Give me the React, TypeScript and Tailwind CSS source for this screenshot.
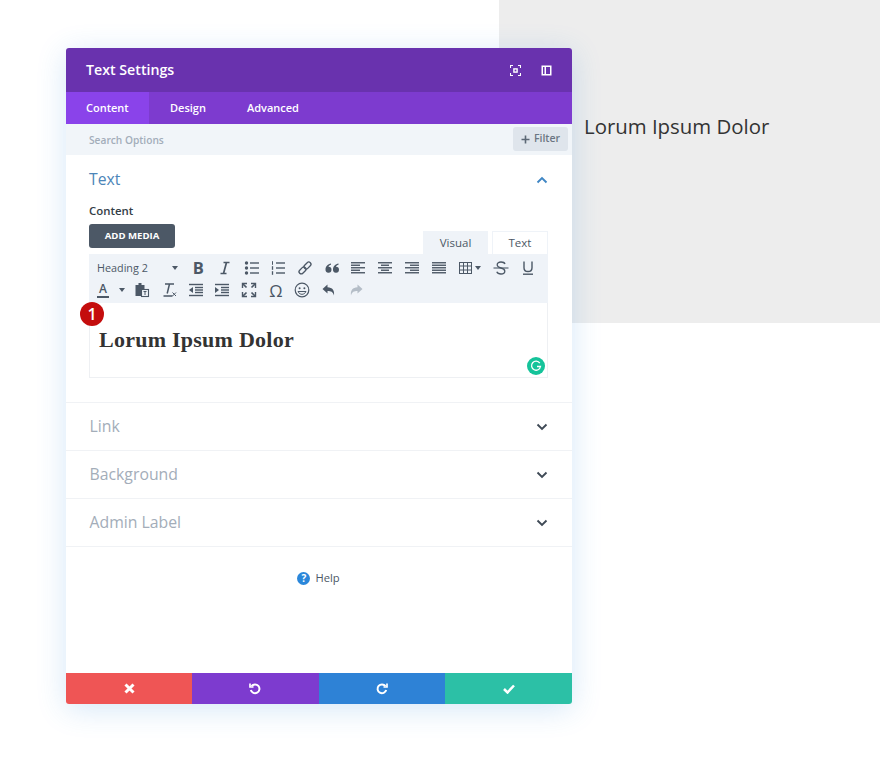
import type { ReactNode } from 'react';

const ink = '#4c5866';

function Svg({ size = 16, children, color = ink }: { size?: number; children: ReactNode; color?: string }) {
  return (
    <svg width={size} height={size} viewBox="0 0 16 16" fill="none" stroke={color} strokeWidth="1.5" style={{ color }}>
      {children}
    </svg>
  );
}

function Lines({ rows }: { rows: [number, number][] }) {
  return (
    <Svg>
      {rows.map(([x1, x2], i) => (
        <line key={i} x1={x1} x2={x2} y1={2.75 + i * 2.5} y2={2.75 + i * 2.5} strokeWidth="1.4" />
      ))}
    </Svg>
  );
}

function Caret() {
  return <span className="block w-0 h-0 border-x-[3.5px] border-x-transparent border-t-[4px] border-t-[#4c5866]" />;
}

function Chevron({ up, color }: { up?: boolean; color: string }) {
  return (
    <svg width="12" height="8" viewBox="0 0 12 8" fill="none" stroke={color} strokeWidth="1.9">
      <polyline points={up ? '1.5,6.5 6,2 10.5,6.5' : '1.5,1.5 6,6 10.5,1.5'} />
    </svg>
  );
}

function Tool({ children }: { children: ReactNode }) {
  return <div className="w-[26.7px] h-[22px] flex items-center justify-center shrink-0">{children}</div>;
}

function ListIcon({ numbered }: { numbered?: boolean }) {
  return (
    <Svg>
      {[3, 8, 13].map((y, i) =>
        numbered ? (
          <g key={y}>
            <line x1="6" x2="15" y1={y} y2={y} strokeWidth="1.4" />
            <line x1="2.5" x2="2.5" y1={y - 1.8} y2={y + 1.8} strokeWidth={i === 0 ? 1 : 1.3} />
          </g>
        ) : (
          <g key={y}>
            <line x1="6" x2="15" y1={y} y2={y} strokeWidth="1.4" />
            <circle cx="2.5" cy={y} r="1.7" fill={ink} stroke="none" />
          </g>
        ),
      )}
    </Svg>
  );
}

function IndentIcon({ out }: { out?: boolean }) {
  return (
    <Svg>
      <line x1="1" x2="15" y1="2.5" y2="2.5" strokeWidth="1.4" />
      <line x1="7" x2="15" y1="5.5" y2="5.5" strokeWidth="1.4" />
      <line x1="7" x2="15" y1="8" y2="8" strokeWidth="1.4" />
      <line x1="7" x2="15" y1="10.5" y2="10.5" strokeWidth="1.4" />
      <line x1="1" x2="15" y1="13.5" y2="13.5" strokeWidth="1.4" />
      <polygon points={out ? '5,5 5,11 1,8' : '1,5 1,11 5,8'} fill={ink} stroke="none" />
    </Svg>
  );
}

function Toolbar() {
  return (
    <div className="bg-[#eff3f8] h-[49px] pt-[3px]">
      <div className="flex items-center h-[22px]">
        <div className="w-[96px] pl-2 pr-[7px] flex items-center justify-between text-[10.8px] text-[#4c5866]">
          <span>Heading 2</span>
          <Caret />
        </div>
        <Tool>
          <span className="text-[16.5px] font-bold text-[#4c5866]">B</span>
        </Tool>
        <Tool>
          <Svg>
            <path d="M6.5 2.5h6M3.5 13.5h6M9.5 2.5l-3 11" strokeWidth="1.7" />
          </Svg>
        </Tool>
        <Tool>
          <ListIcon />
        </Tool>
        <Tool>
          <ListIcon numbered />
        </Tool>
        <Tool>
          <Svg>
            <g transform="rotate(-45 8 8)" strokeWidth="1.3">
              <rect x="0.5" y="5.8" width="8" height="4.4" rx="2.2" />
              <rect x="7.5" y="5.8" width="8" height="4.4" rx="2.2" />
            </g>
          </Svg>
        </Tool>
        <Tool>
          <Svg>
            <path
              d="M7 3.5C4 4.2 1.5 6 1.5 9.5a3 3 0 1 0 3-2.8c.3-.9 1.2-1.6 2.5-2zM14.5 3.5c-3 .7-5.5 2.5-5.5 6a3 3 0 1 0 3-2.8c.3-.9 1.2-1.6 2.5-2z"
              fill={ink}
              stroke="none"
            />
          </Svg>
        </Tool>
        <Tool>
          <Lines rows={[[1, 15], [1, 10], [1, 15], [1, 10], [1, 15]]} />
        </Tool>
        <Tool>
          <Lines rows={[[1, 15], [4, 12], [1, 15], [4, 12], [1, 15]]} />
        </Tool>
        <Tool>
          <Lines rows={[[1, 15], [6, 15], [1, 15], [6, 15], [1, 15]]} />
        </Tool>
        <Tool>
          <Lines rows={[[1, 15], [1, 15], [1, 15], [1, 15], [1, 15]]} />
        </Tool>
        <div className="w-[36px] h-[22px] pl-[7px] flex items-center gap-[3px] shrink-0">
          <svg width="13" height="12" viewBox="0 0 13 12" fill="none" stroke={ink} strokeWidth="1" className="shrink-0">
            <rect x="0.5" y="0.5" width="12" height="11" />
            <path d="M0.5 4h12M0.5 8h12M4.5 0.5v11M8.5 0.5v11" />
          </svg>
          <Caret />
        </div>
        <Tool>
          <Svg>
            <line x1="0.5" x2="15.5" y1="8" y2="8" strokeWidth="1.1" />
            <path d="M12 4C11.500 2.600 10.200 2 8 2 5.700 2 4.200 3 4.200 4.800S5.700 7.400 8 8s3.800 1.400 3.800 3.200S10.300 14 8 14c-2.200 0-3.600-.7-4.200-2.200" strokeWidth="1.3" />
          </Svg>
        </Tool>
        <Tool>
          <Svg>
            <path d="M4 1.500v6.200c0 2.600 1.500 3.800 4 3.800s4-1.200 4-3.800V1.500" strokeWidth="1.4" />
            <line x1="3" x2="13" y1="14.200" y2="14.200" strokeWidth="1.4" />
          </Svg>
        </Tool>
      </div>
      <div className="flex items-center h-[22px]">
        <div className="w-[40px] h-[22px] flex items-center shrink-0">
          <span className="w-[28px] flex justify-center">
            <span className="text-[12px] leading-[14px] font-semibold text-[#4c5866] border-b-2 border-[#4c5866] px-[2px]">A</span>
          </span>
          <span className="ml-[2px]">
            <Caret />
          </span>
        </div>
        <Tool>
          <Svg>
            <path d="M1.500 3h9v4H7v7H1.500z" fill={ink} stroke="none" />
            <rect x="4.500" y="1" width="3" height="3" fill={ink} stroke="none" />
            <rect x="7.500" y="7.500" width="7" height="7" fill="#eff3f8" strokeWidth="1.100" />
            <path d="M9.500 9.500h3M11 9.500v3.500" strokeWidth="1" />
          </Svg>
        </Tool>
        <Tool>
          <Svg>
            <path d="M4 2h9M8.500 2l-2.300 9.500M2.500 14h9" strokeWidth="1.500" />
            <path d="M11.500 10.500l3.500 3.500M15 10.500L11.500 14" strokeWidth="1" />
          </Svg>
        </Tool>
        <Tool>
          <IndentIcon out />
        </Tool>
        <Tool>
          <IndentIcon />
        </Tool>
        <Tool>
          <Svg>
            <path d="M1.500 6V1.500H6M10 1.500h4.500V6M14.500 10v4.500H10M6 14.500H1.500V10" strokeWidth="1.400" />
            <path d="M2 2l3.500 3.500M14 2l-3.500 3.500M14 14l-3.500-3.500M2 14l3.500-3.500" strokeWidth="1.700" />
          </Svg>
        </Tool>
        <Tool>
          <span className="text-[17px] leading-none text-[#4c5866]">Ω</span>
        </Tool>
        <Tool>
          <Svg>
            <circle cx="8" cy="8" r="6.800" strokeWidth="1.200" />
            <circle cx="5.600" cy="6.200" r="1" fill={ink} stroke="none" />
            <circle cx="10.400" cy="6.200" r="1" fill={ink} stroke="none" />
            <path d="M4 9.500c1 2 2.400 2.800 4 2.800s3-.8 4-2.800z" strokeWidth="1" />
          </Svg>
        </Tool>
        <Tool>
          <Svg>
            <path d="M6.500 2.500L1.500 7l5 4.500V9c3.500 0 5.500.8 6.500 4.500.7-5-1.500-8-6.500-8.200z" fill={ink} stroke="none" />
          </Svg>
        </Tool>
        <Tool>
          <Svg>
            <path d="M9.500 2.500l5 4.500-5 4.500V9C6 9 4 9.800 3 13.500 2.300 8.500 4.500 5.500 9.500 5.300z" fill="#b4bdc7" stroke="none" />
          </Svg>
        </Tool>
      </div>
    </div>
  );
}

function Section({ label }: { label: string }) {
  return (
    <div className="h-[48px] border-b border-[#f0f2f5] pl-[23.5px] pr-[24px] flex items-center justify-between shrink-0">
      <span className="text-[15.8px] text-[#a3adb9]">{label}</span>
      <Chevron color="#3f4a56" />
    </div>
  );
}

function FooterButton({ className, children }: { className: string; children: ReactNode }) {
  return <div className={`flex items-center justify-center ${className}`}>{children}</div>;
}

export default function App() {
  return (
    <div className="relative w-[880px] h-[766px] bg-white overflow-hidden font-['Open_Sans',sans-serif]">
      <div className="ml-[499px] h-[323px] bg-[#ededed] pl-[85px] pt-[111px]">
        <p className="text-[20.4px] leading-[30px] text-[#333333]">Lorum Ipsum Dolor</p>
      </div>

      <div className="absolute left-[66px] top-[48px] w-[506px] h-[656px] bg-white rounded-[3px] shadow-[0_5px_30px_rgba(43,135,218,0.2)] flex flex-col">
        <div className="h-[44px] bg-[#6932ae] rounded-t-[3px] pl-[20px] pr-[20px] flex items-center justify-between shrink-0">
          <span className="text-[14.2px] font-semibold text-white">Text Settings</span>
          <div className="flex items-center gap-[20px]">
            <svg width="11" height="11" viewBox="0 0 11 11" fill="none" stroke="white" strokeWidth="1.100">
              <path d="M0.500 3V0.500H3M8 0.500h2.500V3M10.500 8v2.500H8M3 10.500H0.500V8" />
              <rect x="3.200" y="3.200" width="4.600" height="4.600" fill="white" stroke="none" />
              <rect x="4.600" y="4.600" width="1.800" height="1.800" fill="#6932ae" stroke="none" />
            </svg>
            <svg width="11" height="11" viewBox="0 0 11 11" fill="white">
              <path fillRule="evenodd" d="M0.500 0.500h10v10h-10zM2 2v7h1.500V2zM5 2v7h4V2z" />
            </svg>
          </div>
        </div>

        <div className="h-[32px] pt-[1px] bg-[#7d3bcf] flex text-[11px] font-semibold text-white shrink-0">
          <div className="w-[83px] -mt-[1px] pt-[1px] bg-[#8a43ea] pl-[20px] flex items-center">Content</div>
          <div className="pl-[21px] flex items-center">Design</div>
          <div className="pl-[41px] flex items-center">Advanced</div>
        </div>

        <div className="h-[31px] bg-[#f1f5f9] pl-[23px] pr-[4px] flex justify-between shrink-0">
          <span className="text-[10.2px] leading-[33px] font-semibold text-[#a3adb9]">Search Options</span>
          <div className="mt-[3px] w-[55px] h-[24px] rounded-[3px] bg-[#dfe5ec] flex items-center justify-center gap-[4px] text-[10.5px] font-semibold text-[#6b7683]">
            <svg width="9" height="9" viewBox="0 0 9 9" stroke="#5c6875" strokeWidth="1.600">
              <path d="M4.500 0.500v8M0.500 4.500h8" />
            </svg>
            Filter
          </div>
        </div>

        <div className="h-[248px] border-b border-[#f0f2f5] pl-[23px] pr-[24px] pt-[12px] shrink-0">
          <div className="flex items-center justify-between h-[26px]">
            <span className="text-[15.7px] text-[#4c85b8]">Text</span>
            <Chevron up color="#3f86c4" />
          </div>
          <div className="mt-[10px] text-[11.4px] leading-[16px] font-semibold text-[#333d47]">Content</div>
          <div className="relative mt-[5px] flex items-end justify-between h-[30px]">
            <div className="absolute left-0 top-0 w-[86px] h-[24px] rounded-[3px] bg-[#4c5866] flex items-center justify-center text-[9.6px] font-bold text-white">
              ADD MEDIA
            </div>
            <div />
            <div className="flex gap-[4px] text-[11.500px] text-[#4c5866]">
              <div className="w-[65px] h-[23px] bg-[#eff3f8] flex items-center justify-center">Visual</div>
              <div className="w-[56px] h-[23px] bg-white border border-b-0 border-[#eff3f8] flex items-center justify-center">Text</div>
            </div>
          </div>
          <Toolbar />
          <div className="relative h-[75px] border border-t-0 border-[#eef0f3] pl-[9px] pt-[23px]">
            <p className="font-['Liberation_Serif',serif] font-bold text-[22px] leading-[28px] tracking-[0.25px] text-[#333333]">
              Lorum Ipsum Dolor
            </p>
            <div className="absolute right-[2.500px] bottom-[2px] w-[18px] h-[18px] rounded-full bg-[#15c39a] flex items-center justify-center">
              <svg width="12" height="12" viewBox="0 0 12 12" fill="none" stroke="white" strokeWidth="1.300">
                <path d="M9.800 3.200A4.500 4.500 0 1 0 10.500 6.500H7" />
              </svg>
            </div>
          </div>
          <div className="absolute left-[14px] top-[254px] w-[24px] h-[24px] rounded-full bg-[#c40d0d] flex items-center justify-center text-[16px] font-semibold text-white">
            1
          </div>
        </div>

        <Section label="Link" />
        <Section label="Background" />
        <Section label="Admin Label" />

        <div className="flex-1 pt-[23px] flex justify-center">
          <div className="flex items-center gap-[5px] h-[16px] -ml-[1px]">
            <div className="w-[13px] h-[13px] rounded-full bg-[#2b87da] flex items-center justify-center text-[10px] font-bold text-white">?</div>
            <span className="text-[11.200px] text-[#4c5866]">Help</span>
          </div>
        </div>

        <div className="h-[31px] flex overflow-hidden rounded-b-[3px] shrink-0">
          <FooterButton className="w-[126px] bg-[#ef5555]">
            <svg width="11" height="11" viewBox="0 0 11 11" stroke="white" strokeWidth="3">
              <path d="M1.500 1.500l8 8M9.500 1.500l-8 8" />
            </svg>
          </FooterButton>
          <FooterButton className="flex-1 bg-[#7d3bcf]">
            <svg width="12" height="12" viewBox="0 0 12 12" fill="none" stroke="white" strokeWidth="2">
              <path d="M2.500 3.200A4.400 4.400 0 1 1 1.800 7" />
              <path d="M1 0.500v3.500h3.500" strokeWidth="1.700" />
            </svg>
          </FooterButton>
          <FooterButton className="flex-1 bg-[#2e82d6]">
            <svg width="12" height="12" viewBox="0 0 12 12" fill="none" stroke="white" strokeWidth="2">
              <path d="M9.500 3.200A4.400 4.400 0 1 0 10.200 7" />
              <path d="M11 0.500v3.500H7.500" strokeWidth="1.700" />
            </svg>
          </FooterButton>
          <FooterButton className="flex-1 bg-[#2cc0a6]">
            <svg width="12" height="10" viewBox="0 0 12 10" fill="none" stroke="white" strokeWidth="2.500">
              <path d="M1 5l3.500 3.500L11 1.500" />
            </svg>
          </FooterButton>
        </div>
      </div>
    </div>
  );
}
